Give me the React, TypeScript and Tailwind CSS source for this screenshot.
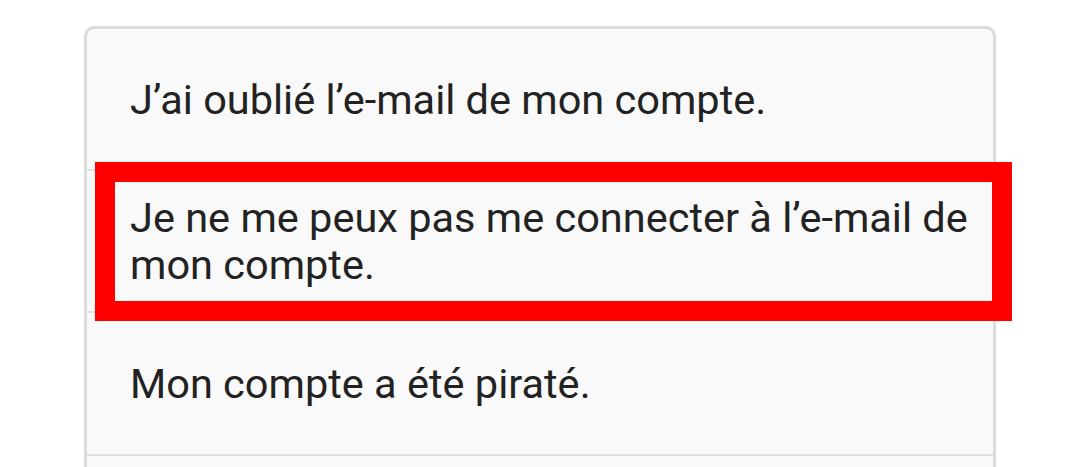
const ITEMS = [
  "J\u2019ai oublié l\u2019e-mail de mon compte.",
  "Je ne me peux pas me connecter à l\u2019e-mail de mon compte.",
  "Mon compte a été piraté.",
];

const HEIGHTS = ["h-[140px]", "h-[142px] border-t-2", "h-[143px] border-t-2"];

export default function App() {
  return (
    <div className="h-[467px] w-[1080px] overflow-hidden bg-white pt-[26px] font-['Roboto',sans-serif]">
      <div className="ml-[84px] w-[912px] rounded-t-[10px] border-x-[3px] border-t-[3px] border-[#dcdcdc] bg-[#f9f9f9]">
        {ITEMS.map((text, index) => (
          <div
            key={text}
            className={`relative flex items-center border-[#e0e0e0] pl-[43px] pr-[20px] text-[41.5px] leading-[47px] text-[#222222] ${HEIGHTS[index]}`}
          >
            {text}
            {index === 1 && (
              <div className="pointer-events-none absolute -top-[9px] -right-[19px] -bottom-[10px] left-[8px] z-10 border-[20px] border-[#ff0000]" />
            )}
          </div>
        ))}
        {/* next item, cut off by the bottom of the screen */}
        <div className="h-[40px] border-t-2 border-[#e0e0e0]" />
      </div>
    </div>
  );
}
